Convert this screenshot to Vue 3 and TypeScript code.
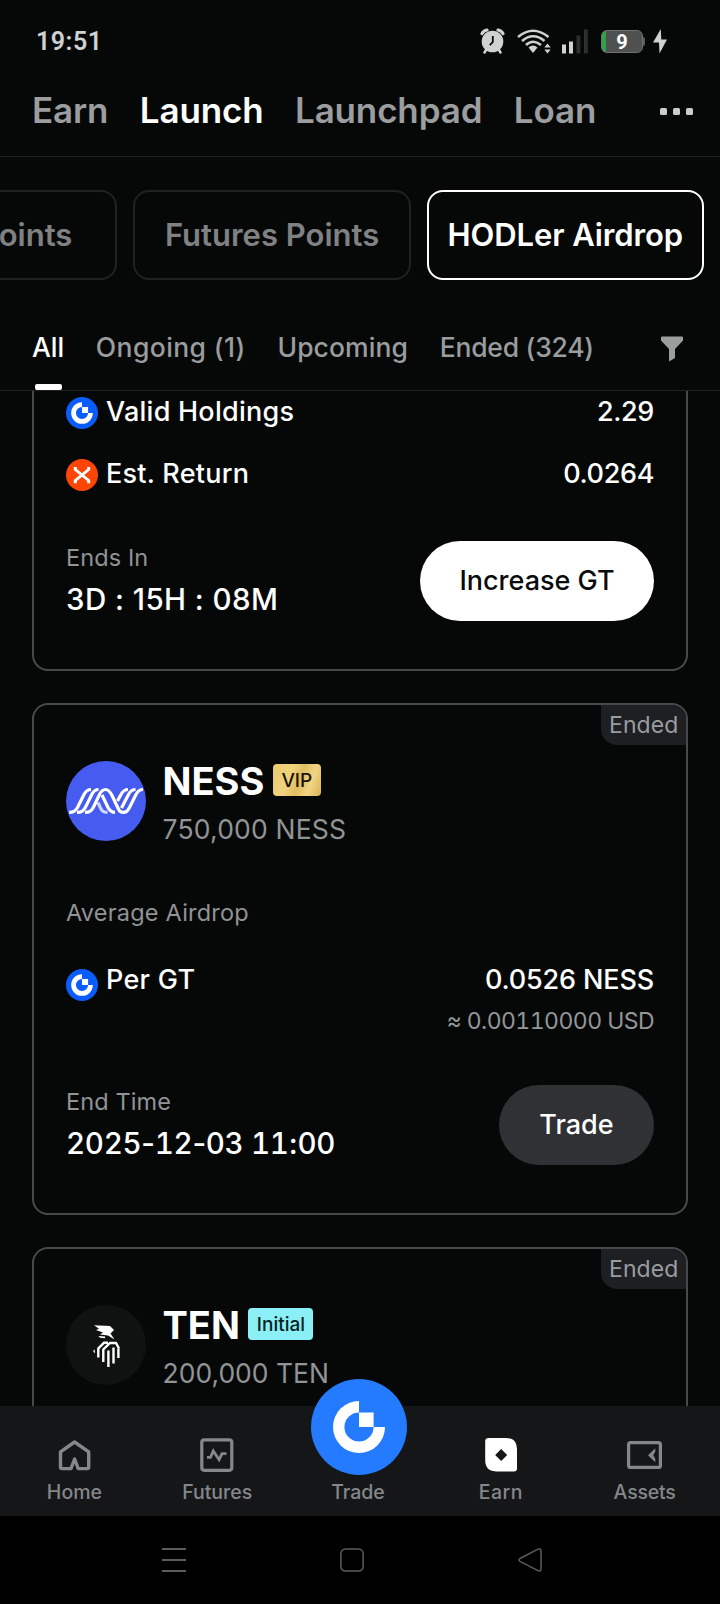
<script setup lang="ts">
import { ref } from 'vue'

interface Airdrop {
  name: string
  logo: 'ness' | 'ten'
  badge: string
  badgeType: 'vip' | 'initial'
  pool: string
  perGt: string
  usd: string
  endTime: string
}

const topTabs = ['Earn', 'Launch', 'Launchpad', 'Loan']
const activeTop = ref('Launch')

const pills = ['Points', 'Futures Points', 'HODLer Airdrop']
const activePill = ref('HODLer Airdrop')

const filters = ['All', 'Ongoing (1)', 'Upcoming', 'Ended (324)']
const activeFilter = ref('All')

const airdrops: Airdrop[] = [
  {
    name: 'NESS',
    logo: 'ness',
    badge: 'VIP',
    badgeType: 'vip',
    pool: '750,000 NESS',
    perGt: '0.0526 NESS',
    usd: '≈ 0.00110000 USD',
    endTime: '2025-12-03 11:00',
  },
  {
    name: 'TEN',
    logo: 'ten',
    badge: 'Initial',
    badgeType: 'initial',
    pool: '200,000 TEN',
    perGt: '',
    usd: '',
    endTime: '',
  },
]

const navItems = ['Home', 'Futures', 'Trade', 'Earn', 'Assets']

// digits get tabular figures, separators stay proportional
function timeParts(time: string) {
  return time.split(/(\d+)/).filter(Boolean)
}

// ring with an open quarter and a square in it, centred on 0,0
const gatePath =
  'M0-26A26 26 0 1 0 26 0H14.6A14.6 14.6 0 1 1 0-14.6ZM0-14.6H14.6V0H0Z'
</script>

<template>
  <div class="screen">
    <header class="status">
      <span class="clock">19:51</span>
      <div class="status-icons">
        <svg class="alarm" width="25" height="26" viewBox="0 0 25 26">
          <circle cx="12.5" cy="13.5" r="10.8" fill="#d0d2d2" />
          <path d="M2 5.6Q3.5 2.6 7 2M23 5.6Q21.5 2.6 18 2" stroke="#d0d2d2" stroke-width="3.2" stroke-linecap="round" fill="none" />
          <path d="M6 22l-1.5 2.5M19 22l1.5 2.5" stroke="#d0d2d2" stroke-width="2.5" stroke-linecap="round" />
          <path d="M12.8 8v6l-3 3.2" stroke="#060808" stroke-width="1.8" fill="none" />
        </svg>
        <svg class="wifi" width="34" height="26" viewBox="0 0 34 26">
          <g fill="none" stroke="#d0d2d2" stroke-width="2.6">
            <path d="M1 9Q16 -3.5 31.5 9" />
            <path d="M5 13Q16 3.5 27.5 13" />
            <path d="M9 17Q16 10.5 24 17" />
          </g>
          <path d="M11.5 19.5Q16 15.5 20.5 19.5L16 25Z" fill="#d0d2d2" />
          <path d="M30.5 15.5l3.2 4h-6.4zM30.5 25.5l3.2-4h-6.4z" fill="#d0d2d2" />
        </svg>
        <svg class="signal" width="26" height="26" viewBox="0 0 26 26">
          <path d="M0 16.5h4V25.5H0zM7 13.5h4v12H7z" fill="#d0d2d2" />
          <path d="M14.5 7.5h3.8v18h-3.8zM22 1.5h3.8v24H22z" fill="#2d2f2f" />
        </svg>
        <div class="battery"><span>9</span></div>
        <svg class="bolt" width="14" height="26" viewBox="0 0 14 26">
          <path d="M7.8 1L0 14.5H6L6.5 25.5 14 11.5H8.3Z" fill="#d0d2d2" />
        </svg>
      </div>
    </header>

    <nav class="top-tabs">
      <span
        v-for="t in topTabs"
        :key="t"
        class="top-tab"
        :class="{ active: t === activeTop }"
        @click="activeTop = t"
      >{{ t }}</span>
      <span class="more"><i></i><i></i><i></i></span>
    </nav>

    <div class="pills">
      <button
        v-for="p in pills"
        :key="p"
        class="pill"
        :class="{ active: p === activePill, cut: p === 'Points' }"
        @click="activePill = p"
      >{{ p }}</button>
    </div>

    <div class="filters">
      <span
        v-for="f in filters"
        :key="f"
        class="filter"
        :class="{ active: f === activeFilter }"
        @click="activeFilter = f"
      >{{ f }}</span>
      <svg class="funnel" width="22" height="26" viewBox="0 0 22 26">
        <path d="M1 .5H21Q22 .5 22 1.5V4.5L14 13V22L8 25.5V13L0 4.5V1.5Q0 .5 1 .5Z" fill="#9b9d9f" />
      </svg>
    </div>

    <main class="list">
      <section class="card first">
        <div class="row">
          <svg class="coin" viewBox="-16 -16 32 32">
            <circle r="16" fill="#0a5dfc" />
            <path :d="gatePath" transform="scale(.416)" fill="#fff" />
          </svg>
          <span class="row-label">Valid Holdings</span>
          <span class="row-value">2.29</span>
        </div>
        <div class="row">
          <svg class="coin" viewBox="0 0 32 32">
            <circle cx="16" cy="16" r="16" fill="#fd4506" />
            <g fill="none" stroke="#fff" stroke-width="2.8">
              <path d="M7.8 9.4H9.4V10.6L22.6 21.4V22.8H24.2" />
              <path d="M24.2 9.4H22.6V10.6L9.4 21.4V22.8H7.8" />
            </g>
          </svg>
          <span class="row-label return">Est. Return</span>
          <span class="row-value">0.0264</span>
        </div>
        <div class="card-foot">
          <div>
            <div class="muted">Ends In</div>
            <div class="time left">3D : 15H : 08M</div>
          </div>
          <button class="btn light">Increase GT</button>
        </div>
      </section>

      <section v-for="a in airdrops" :key="a.name" class="card">
        <span class="tag">Ended</span>
        <div class="card-head">
          <svg v-if="a.logo === 'ness'" class="logo" viewBox="0 0 80 80">
            <circle cx="40" cy="40" r="40" fill="#465cf1" />
            <g fill="none" stroke="#fff" stroke-width="3.2">
              <path d="M3.2 51.4C7.5 51.4 9 50.5 11.5 46.5L18 33.5C20 29.7 21.5 28.5 25 28.5" />
              <path d="M11 51.4C15.3 51.4 17 50.5 19.3 46.5L25.8 33.5C27.8 29.7 29.3 28.5 32.5 28.5" />
              <path d="M19 51.4C23.3 51.4 25 50.5 27.3 46.5L33 34.5C35 30 36.5 28.5 39.5 28.5C42.5 28.5 44 30.5 46 34.5L51 45C53 49.5 54 51.4 57 51.4C60.5 51.4 61.5 50 63.5 46.5L70 33.5C72 29.7 73.5 28.5 77 28.5" />
              <path d="M36 34L42 46.5C44 50.2 45.5 51.4 49 51.4" />
              <path d="M32 41.5L34.5 47C36.3 50.5 37.5 51.4 41.5 51.4" opacity=".75" />
              <path d="M69.5 28.5C66 28.5 64.5 29.7 62.5 33.5L55.5 47" />
              <path d="M62 28.5C58.5 28.5 57 29.7 55 33.5L51.5 40" />
            </g>
          </svg>
          <svg v-else class="logo" viewBox="0 0 80 80">
            <circle cx="40" cy="40" r="40" fill="#101111" />
            <path d="M28 20.3L44 21 48 25 44.5 28.5 48.5 34.5 42 30.5 34 29.5 37 27.5 30 25 33 23.7Z" fill="#fff" />
            <path d="M32.5 31l6.5 .5v1.8l-5-.5zM27 46l1.8-1.5v4z" fill="#fff" />
            <g fill="none" stroke="#fff" stroke-width="2.4">
              <path d="M32.3 52.5V43.5L38 37.8H42" />
              <path d="M37.3 57V44.5L44 38H50L53 43.5" />
              <path d="M42.4 62V45.5M47.5 58.5V42.5M52.4 53V43.5" />
            </g>
          </svg>
          <div>
            <div class="name-line">
              <span class="name">{{ a.name }}</span>
              <span class="badge" :class="a.badgeType">{{ a.badge }}</span>
            </div>
            <div class="pool" :class="a.logo">{{ a.pool }}</div>
          </div>
        </div>
        <template v-if="a.perGt">
          <div class="muted average">Average Airdrop</div>
          <div class="row per">
            <svg class="coin" viewBox="-16 -16 32 32">
              <circle r="16" fill="#0a5dfc" />
              <path :d="gatePath" transform="scale(.416)" fill="#fff" />
            </svg>
            <span class="row-label per-gt">Per GT</span>
            <div class="amounts">
              <div class="row-value">{{ a.perGt }}</div>
              <div class="usd">{{ a.usd }}</div>
            </div>
          </div>
          <div class="card-foot">
            <div>
              <div class="muted">End Time</div>
              <div class="time">
                <span v-for="(p, i) in timeParts(a.endTime)" :key="i" :class="{ num: /\d/.test(p) }">{{ p }}</span>
              </div>
            </div>
            <button class="btn dark">Trade</button>
          </div>
        </template>
      </section>
    </main>

    <nav class="bottom-nav">
      <div v-for="n in navItems" :key="n" class="nav-item">
        <svg v-if="n === 'Home'" class="nav-icon home" viewBox="0 0 36 36">
          <path d="M19.6 22L16 31.6H7Q5.5 31.6 5.5 30.1V14.8L19.6 5 33.7 14.8V30.1Q33.7 31.6 32.2 31.6H23.2Z" fill="none" stroke="#85878a" stroke-width="3.4" stroke-linejoin="round" />
        </svg>
        <svg v-else-if="n === 'Futures'" class="nav-icon" viewBox="0 0 36 36">
          <rect x="3.8" y="2.8" width="30" height="30.5" rx="2.5" fill="none" stroke="#85878a" stroke-width="3.2" />
          <path d="M9 20.3H12.5L15.3 14 21.1 22.7 24 16.7H28.5" fill="none" stroke="#85878a" stroke-width="2.8" />
        </svg>
        <span v-else-if="n === 'Trade'" class="fab">
          <svg viewBox="-48 -48 96 96">
            <circle r="48" fill="#247bff" />
            <path :d="gatePath" fill="#fff" />
          </svg>
        </span>
        <svg v-else-if="n === 'Earn'" class="nav-icon" viewBox="0 0 36 36">
          <path d="M4.500 1H22Q33 1 33 12V31.5Q33 34.5 30 34.5H13Q1.2 34.5 1.2 23V4.5Q1.2 1 4.5 1Z" fill="#fff" />
          <path d="M17.2 12L23.2 18 17.2 24 11.2 18Z" fill="#141618" />
        </svg>
        <svg v-else class="nav-icon" viewBox="0 0 36 36">
          <rect x="1.6" y="5.6" width="31.8" height="24.8" rx="2" fill="none" stroke="#85878a" stroke-width="3.2" />
          <path d="M21 18.3L28.3 11.3V14.5L26.3 18.3 28.3 22V25.3Z" fill="#85878a" />
        </svg>
        <span class="nav-label" :class="n.toLowerCase()">{{ n }}</span>
      </div>
    </nav>

    <div class="system-nav">
      <svg width="24" height="24" viewBox="0 0 24 24">
        <path d="M0 1H24M0 12H24M0 23H24" stroke="#5c5c5c" stroke-width="1.8" />
      </svg>
      <svg width="24" height="24" viewBox="0 0 24 24">
        <rect x=".9" y=".9" width="22.2" height="22.2" rx="4.5" fill="none" stroke="#5c5c5c" stroke-width="1.5" />
      </svg>
      <svg width="24" height="24" viewBox="0 0 24 24">
        <path d="M2 10.5L20 1.2Q23 .3 23 3V21Q23 23.7 20 22.6L2 13.4Q0 12 2 10.5Z" fill="none" stroke="#5c5c5c" stroke-width="1.5" />
      </svg>
    </div>
  </div>
</template>

<style>
body {
  background: #060808;
}
</style>

<style scoped>
.screen {
  width: 720px;
  height: 1604px;
  display: flex;
  flex-direction: column;
  overflow: hidden;
  background: #060808;
  color: #fff;
  font-family: Inter, 'Liberation Sans', sans-serif;
  white-space: nowrap;
}

.screen * {
  box-sizing: border-box;
}

svg {
  display: block;
  flex: none;
}

button {
  font-family: inherit;
  padding: 0;
  cursor: pointer;
}

.status {
  display: flex;
  justify-content: space-between;
  align-items: center;
  height: 82px;
  padding: 0 53px 0 36px;
}

.clock {
  font-family: Roboto, sans-serif;
  font-size: 25px;
  font-weight: 600;
  letter-spacing: 0.5px;
  color: #d0d2d2;
}

.status-icons {
  display: flex;
  align-items: center;
}

.wifi {
  margin-left: 12px;
}

.signal {
  margin-left: 11px;
}

.battery {
  position: relative;
  width: 42px;
  height: 23px;
  margin: 0 10px 0 13px;
  border-radius: 6px;
  border: 1px solid #707070;
  background: linear-gradient(90deg, #31a346 4px, #4f5050 4px);
  font: 700 20px/22px Roboto, sans-serif;
  text-align: center;
}

.battery::after {
  content: '';
  position: absolute;
  right: -3px;
  top: 6px;
  width: 2px;
  height: 9px;
  border-radius: 0 2px 2px 0;
  background: #5a5b5b;
}

.top-tabs {
  display: flex;
  align-items: flex-start;
  gap: 31.5px;
  height: 75px;
  padding: 0 27px 0 32px;
  border-bottom: 1px solid #1f2122;
}

.top-tab {
  font-size: 35px;
  font-weight: 630;
  line-height: 56px;
  letter-spacing: -0.15px;
  color: #9b9d9f;
}

.top-tab.active {
  color: #fff;
}

.more {
  display: flex;
  gap: 6px;
  margin: 26px 0 0 auto;
}

.more i {
  width: 7px;
  height: 7px;
  border-radius: 1.5px;
  background: #cacccc;
}

.pills {
  display: flex;
  justify-content: flex-end;
  gap: 16px;
  padding: 33px 16px 0 0;
}

.pill {
  flex: none;
  width: 277.3px;
  height: 90px;
  padding-bottom: 2px;
  border: 2px solid #1f2122;
  border-radius: 16px;
  background: none;
  font-size: 31px;
  font-weight: 620;
  color: #7f8183;
}

.pill.cut {
  padding-right: 43px;
  text-align: right;
}

.pill.active {
  border-color: #fff;
  color: #fff;
  letter-spacing: -0.1px;
}

.filters {
  display: flex;
  gap: 31.7px;
  height: 111px;
  padding: 46px 37px 0 32px;
  border-bottom: 1px solid #1f2122;
  font-size: 26.5px;
  font-weight: 500;
  line-height: 43px;
  color: #9a9c9e;
}

.filter {
  position: relative;
}

.filter:nth-child(2) {
  letter-spacing: 0.4px;
}

.filter:nth-child(3) {
  letter-spacing: 0.1px;
}

.filter:nth-child(4) {
  letter-spacing: -0.25px;
}

.filter.active {
  color: #fff;
}

.filter.active::after {
  content: '';
  position: absolute;
  left: 3px;
  bottom: 0;
  width: 26.5px;
  height: 6px;
  border-radius: 2px;
  background: #fff;
}

.funnel {
  margin: 10px 0 0 auto;
}

.list {
  height: 1015px;
  overflow: hidden;
}

.card {
  position: relative;
  overflow: hidden;
  margin: 32px 32px 0;
  padding: 56px 32px 48px;
  border: 2px solid #484a4a;
  border-radius: 16px;
}

.card.first {
  margin-top: 0;
  padding-top: 6px;
  border-top: none;
  border-radius: 0 0 16px 16px;
}

.tag {
  position: absolute;
  top: 0;
  right: 0;
  width: 85px;
  height: 40px;
  padding-left: 8px;
  border-bottom-left-radius: 16px;
  background: #1d1f23;
  font-size: 23px;
  line-height: 40px;
  letter-spacing: 0.1px;
  color: #9a9ca0;
}

.row {
  display: flex;
  align-items: flex-start;
  font-size: 27px;
  font-weight: 500;
  line-height: 29px;
}

.row + .row {
  margin-top: 30px;
}

.coin {
  width: 32px;
  height: 32px;
  margin-right: 8px;
}

.row-label {
  letter-spacing: 0.25px;
}

.row-label.per-gt {
  letter-spacing: 0.3px;
}

.row-value {
  margin-left: auto;
  letter-spacing: -0.35px;
}

.row.per {
  height: 73px;
  margin-top: 35px;
  line-height: 32px;
}

.per .coin {
  margin-top: 5px;
}

.amounts {
  margin-left: auto;
  text-align: right;
}

.amounts .row-value {
  letter-spacing: -0.15px;
}

.usd {
  margin-top: 9px;
  font-size: 23px;
  font-weight: 400;
  letter-spacing: -0.55px;
  font-variant-numeric: tabular-nums;
  color: #949698;
}

.muted {
  font-size: 23.5px;
  line-height: 34px;
  letter-spacing: 0.1px;
  color: #919395;
}

.muted.average {
  margin-top: 56px;
  line-height: 32px;
  letter-spacing: 0.22px;
}

.card-foot {
  display: flex;
  justify-content: space-between;
  height: 80px;
  margin-top: 48px;
}

.first .card-foot {
  margin-top: 50px;
}

.time {
  font-size: 29.5px;
  font-weight: 500;
  line-height: 49px;
  letter-spacing: -0.28px;
}

.time.left {
  letter-spacing: 0.45px;
}

.num {
  font-variant-numeric: tabular-nums;
}

.btn {
  height: 80px;
  padding-bottom: 2px;
  border: none;
  border-radius: 40px;
  font-size: 27px;
  font-weight: 500;
}

.btn.light {
  width: 234px;
  background: #fff;
  color: #0a0b0c;
}

.btn.dark {
  width: 155px;
  background: #303134;
  color: #fff;
}

.card-head {
  display: flex;
  gap: 16.5px;
  height: 80px;
}

.logo {
  width: 80px;
  height: 80px;
}

.name-line {
  display: flex;
  align-items: flex-start;
}

.name {
  font-size: 38px;
  font-weight: 700;
  line-height: 40px;
}

.badge {
  height: 32px;
  margin: 3px 0 0 8.5px;
  border-radius: 4px;
  text-align: center;
  line-height: 33px;
  font-weight: 500;
  color: #1a1508;
}

.badge.vip {
  width: 48px;
  font-size: 19px;
  background: linear-gradient(110deg, #e9ca72 0%, #f0d37e 35%, #e0bd60 55%, #f2d584 75%, #d9b459 100%);
}

.badge.initial {
  width: 65px;
  font-size: 19px;
  color: #0b2224;
  background: #8af0f6;
}

.pool {
  margin-top: 10px;
  font-size: 26.5px;
  line-height: 36px;
  letter-spacing: 0.2px;
  color: #919395;
}

.pool.ten {
  letter-spacing: 0;
}

.bottom-nav {
  display: grid;
  grid-template-columns: repeat(5, 1fr);
  height: 110px;
  padding: 0 4px 0 2px;
  background: #141618;
}

.nav-item {
  position: relative;
  display: flex;
  flex-direction: column;
  align-items: center;
  justify-content: flex-end;
  padding-bottom: 12px;
}

.nav-icon {
  width: 36px;
  height: 36px;
  margin-bottom: 7px;
}

/* raised button that hangs over the list */
.fab {
  position: absolute;
  top: -27px;
  width: 96px;
  height: 96px;
}

.nav-label {
  font-size: 19.5px;
  font-weight: 450;
  line-height: 24px;
  color: #85878a;
}

.nav-label.home,
.nav-label.futures {
  padding-left: 2px;
}

.nav-label.trade,
.nav-label.earn {
  padding-right: 2px;
}

.nav-label.earn {
  letter-spacing: 0.4px;
}

.nav-label.assets {
  letter-spacing: -0.2px;
}

.system-nav {
  display: flex;
  align-items: center;
  gap: 154px;
  height: 88px;
  padding-left: 162px;
  background: #000;
}
</style>
